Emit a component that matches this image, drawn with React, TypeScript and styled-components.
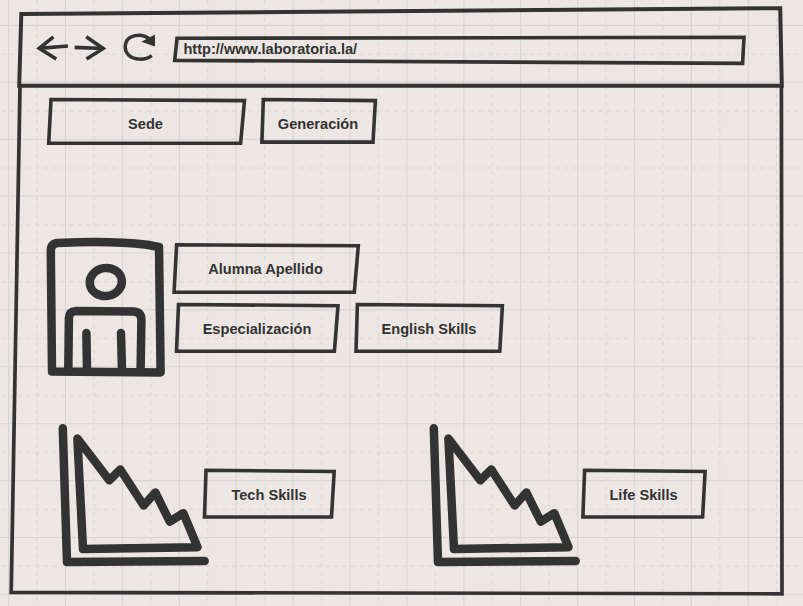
import React from "react";
import styled, { createGlobalStyle } from "styled-components";

const INK = "#333333";

const GlobalStyle = createGlobalStyle`
  html, body { margin: 0; padding: 0; background: #ece7e4; overflow: hidden; }
  *, *::before, *::after { box-sizing: border-box; }
`;

const Page = styled.main`
  position: relative;
  width: 803px;
  height: 606px;
  overflow: hidden;
  background: #ece7e4;
  color: ${INK};
  font: 700 14.6px "Liberation Sans", Arial, sans-serif;
`;

/* Decorative drawing that sits behind the content of its parent. */
const Backdrop = styled.svg`
  position: absolute;
  inset: 0;
  width: 100%;
  height: 100%;
  overflow: visible;
  pointer-events: none;
`;

const BrowserWindow = styled.div`
  position: relative;
  display: flex;
  flex-direction: column;
  height: 100%;
`;

const Toolbar = styled.header`
  display: flex;
  align-items: flex-start;
  height: 86px;
  padding: 34px 0 0 36px;
`;

const ToolIcon = styled.svg<{ $gap: number }>`
  flex: none;
  height: 28px;
  margin-right: ${(p) => p.$gap}px;
  overflow: visible;
`;

const AddressBar = styled.div`
  position: relative;
  width: 570px;
  height: 28px;
  margin-top: 2px;
  padding-left: 9.4px;
  line-height: 26px;
`;

const Url = styled.span`
  position: relative;
`;

const Content = styled.section`
  display: flex;
  flex-direction: column;
  flex: 1;
  padding: 13px 0 0 47px;
`;

const Row = styled.div<{ $gap?: number; $height?: number }>`
  display: flex;
  gap: ${(p) => p.$gap ?? 0}px;
  height: ${(p) => p.$height ?? 48}px;
`;

const Filters = styled(Row)`
  padding-left: 1px;
`;

const Profile = styled(Row)`
  margin-top: 91px;
`;

const ProfileDetails = styled.div`
  display: flex;
  flex-direction: column;
  gap: 12px;
  padding: 6px 0 0 10px;
`;

const Charts = styled(Row)`
  margin-top: 46px;
`;

const ChartGroup = styled.div<{ $width: number }>`
  display: flex;
  align-items: flex-start;
  width: ${(p) => p.$width}px;
  padding-left: 11px;
`;

const ChartLabel = styled.div<{ $left: number }>`
  padding: 47px 0 0 ${(p) => p.$left}px;
`;

const Picture = styled.svg`
  flex: none;
  display: block;
  overflow: visible;
`;

const LabelBox = styled.div<{ $width: number }>`
  position: relative;
  flex: none;
  width: ${(p) => p.$width}px;
  height: 48px;
  line-height: 50px;
  text-align: center;
  white-space: nowrap;
`;

const LabelText = styled.span`
  position: relative;
`;

interface LabelProps {
  text: string;
  width: number;
  outline: string;
}

const Label = ({ text, width, outline }: LabelProps) => (
  <LabelBox $width={width}>
    <Backdrop aria-hidden>
      <polygon points={outline} fill="none" stroke={INK} strokeWidth="3.6" />
    </Backdrop>
    <LabelText>{text}</LabelText>
  </LabelBox>
);

const STEP = 56.9;
const columns = Array.from({ length: 15 }, (_, i) => 8.6 + i * STEP);
const rows = Array.from({ length: 12 }, (_, i) => 25.4 + (i - 1) * STEP);

const PaperGrid = () => (
  <Backdrop aria-hidden>
    <g stroke="#d7d5d4" strokeWidth="1.1">
      {columns.map((x) => (
        <line key={x} x1={x} y1="0" x2={x} y2="606" />
      ))}
      {rows.map((y) => (
        <line key={y} x1="0" y1={y} x2="803" y2={y} />
      ))}
    </g>
    <g stroke="#dedbd9" strokeWidth="1.4" strokeDasharray="4.2 4.33">
      {columns.map((x) => (
        <line key={x} x1={x + STEP / 2} y1="0" x2={x + STEP / 2} y2="606" />
      ))}
      {rows.map((y) => (
        <line key={y} x1="1.2" y1={y + STEP / 2 + 0.3} x2="803" y2={y + STEP / 2 + 0.3} />
      ))}
    </g>
  </Backdrop>
);

const WindowFrame = () => (
  <Backdrop aria-hidden fill="none" stroke={INK}>
    <path d="M20 86L11.2 592.3L782 593.8L781.4 86" strokeWidth="3.7" />
    <polygon points="21.3,14 780.2,8.2 781.8,85.7 19.2,85.7" strokeWidth="4" />
  </Backdrop>
);

const Avatar = () => (
  <Picture width="117" height="139" viewBox="47 238 117 139" fill="none" stroke={INK} strokeWidth="8.5" strokeLinecap="round" strokeLinejoin="round">
    <path d="M52 371.5L50.8 251Q50.8 243.4 58 243Q112 240.5 147 244.8L159 247L160.6 372.4Z" />
    <ellipse cx="105.8" cy="282" rx="16.1" ry="14" transform="rotate(-8 105.8 282)" />
    <path d="M68.3 371L68.9 318Q69 311.4 76 310.9L134 311.6Q141.4 312.4 141.4 320L140.6 371" />
    <path d="M86.4 333L87 371M121 333L122 371" />
  </Picture>
);

const DeclineChart = () => (
  <Picture width="146" height="143" viewBox="58 423 146 143" fill="none" stroke={INK} strokeWidth="8.5" strokeLinecap="round" strokeLinejoin="round">
    <path d="M62.8 428.3L67 562L204.7 561" />
    <path d="M77.4 438.5L109.4 480.3L120.3 469.5L143.7 505.5L155.3 492.5L169.8 521.7L183.3 513.2L197.5 547.2L83 549Z" />
  </Picture>
);

export default function App() {
  return (
    <>
      <GlobalStyle />
      <Page>
        <PaperGrid />
        <BrowserWindow>
          <WindowFrame />
          <Toolbar>
            <ToolIcon $gap={4} width="34" viewBox="36 34 34 28" fill="none" stroke={INK} strokeWidth="3.6">
              <path d="M53.4 36.8L39.2 48.4L56.3 59M39.2 48.4L68 46" />
            </ToolIcon>
            <ToolIcon $gap={15} width="34" viewBox="74 34 34 28" fill="none" stroke={INK} strokeWidth="3.6">
              <path d="M86.2 36.7L103.2 48.5L86.5 59M74.6 47.4L103.2 48.5" />
            </ToolIcon>
            <ToolIcon $gap={17} width="34" viewBox="123 34 34 28" fill="none" stroke={INK} strokeWidth="3.5">
              <path d="M151.8 55.6C145 60.6 134 60.2 128.5 55C123 49 124.6 39.5 132 36.6C137 34.3 144 34.6 149 38.5" />
              <path d="M141.3 41.7L155 34.6V46.6Z" fill={INK} stroke="none" />
            </ToolIcon>
            <AddressBar>
              <Backdrop aria-hidden>
                <polygon points="3,2.3 570,1.3 568.6,27.4 0.7,24.4" fill="none" stroke={INK} strokeWidth="3.6" />
              </Backdrop>
              <Url>http://www.laboratoria.la/</Url>
            </AddressBar>
          </Toolbar>
          <Content>
            <Filters $gap={18}>
              <Label text="Sede" width={195} outline="3,0.5 196.5,1.6 192.6,44.3 0.7,44.3" />
              <Label text="Generación" width={114} outline="2.3,0.5 114.4,1.6 112,43.1 0.9,43.1" />
            </Filters>
            <Profile $height={139}>
              <Avatar />
              <ProfileDetails>
                <Row>
                  <Label text="Alumna Apellido" width={183} outline="2.6,0.8 184.3,1.8 180.3,48.3 0.1,48.3" />
                </Row>
                <Row $gap={16}>
                  <Label text="Especialización" width={166} outline="4.5,0.5 164,1.7 160.4,47.3 2.5,47.3" />
                  <Label text="English Skills" width={146} outline="1.4,0.5 146.4,1.7 143.8,47.3 0,47.3" />
                </Row>
              </ProfileDetails>
            </Profile>
            <Charts $height={143}>
              <ChartGroup $width={371}>
                <DeclineChart />
                <ChartLabel $left={0}>
                  <Label text="Tech Skills" width={130} outline="2,0.3 130.2,1.5 127.5,47 0.5,47" />
                </ChartLabel>
              </ChartGroup>
              <ChartGroup $width={371}>
                <DeclineChart />
                <ChartLabel $left={8}>
                  <Label text="Life Skills" width={121} outline="1.6,0.3 122.1,1.5 119.6,47 -0.1,47" />
                </ChartLabel>
              </ChartGroup>
            </Charts>
          </Content>
        </BrowserWindow>
      </Page>
    </>
  );
}
